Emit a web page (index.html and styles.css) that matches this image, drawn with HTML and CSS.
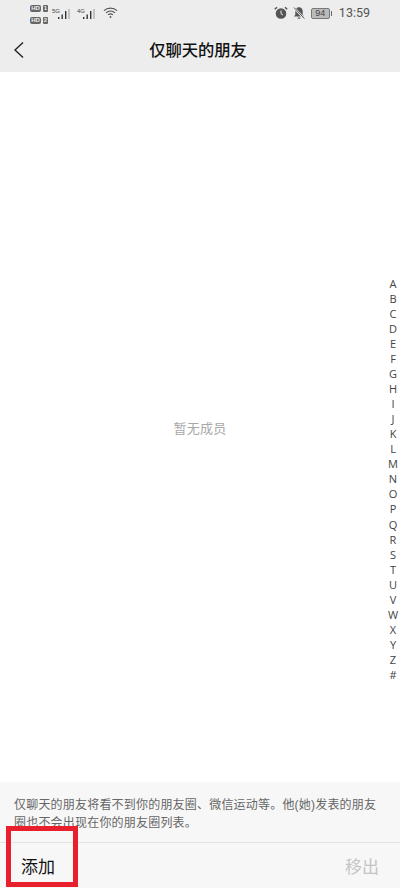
FILE: index.html
```html
<!DOCTYPE html>
<html lang="zh-CN">
<head>
<meta charset="utf-8">
<title>仅聊天的朋友</title>
<link rel="stylesheet" href="styles.css">
</head>
<body>
<div class="page">
  <header class="top">
    <div class="status">
      <div class="status-left">
        <div class="sims">
          <div class="sim"><span class="hd">HD</span><span class="slot">1</span></div>
          <div class="sim"><span class="hd">HD</span><span class="slot">2</span></div>
        </div>
        <div class="signal"><span class="net">5G</span>
          <svg class="bars" viewBox="0 0 16 12"><path d="M1 11h1.400v-2H1zM4.500 11h1.400V6.500H4.500zM8 11h1.400V3H8z" fill="#333"/><path d="M11.500 11h1V1h-1z" fill="#999"/></svg>
        </div>
        <div class="signal"><span class="net">4G</span>
          <svg class="bars" viewBox="0 0 16 12"><path d="M1 11h1.400v-2H1zM4.500 11h1.400V6.500H4.500zM8 11h1.400V3H8z" fill="#333"/><path d="M11.500 11h1V1h-1z" fill="#999"/></svg>
        </div>
        <svg class="wifi" viewBox="0 0 16 13" fill="none" stroke="#555" stroke-width="1.200"><path d="M1 4.500c4-3.600 10-3.600 14 0M3.200 6.900c2.800-2.500 6.800-2.500 9.600 0M5.400 9.100c1.500-1.300 3.700-1.300 5.200 0"/><circle cx="8" cy="11.300" r="1" fill="#555" stroke="none"/></svg>
      </div>
      <div class="status-right">
        <svg class="ico" viewBox="0 0 14 14"><circle cx="7" cy="7.500" r="5.300" fill="#555"/><path d="M7 4.500v3.200l2 1.300" stroke="#eee" stroke-width="1" fill="none"/><path d="M.8 3.300 3 1.200M13.200 3.300 11 1.200" stroke="#555" stroke-width="1.500"/></svg>
        <svg class="ico" viewBox="0 0 14 14"><path d="M7 1.300c-2.500 0-3.700 1.900-3.700 4v3.400L2 10.500h10l-1.300-1.800V5.300c0-2.100-1.200-4-3.700-4z" fill="#555"/><path d="M5.700 11.500h2.600v1.200H5.700z" fill="#555"/><path d="M1.800 1.500l10.400 11" stroke="#eee" stroke-width="2.200"/><path d="M2 1.500l10.300 11" stroke="#555" stroke-width="1"/></svg>
        <div class="battery"><span class="cell">94</span><span class="nub"></span></div>
        <span class="clock">13:59</span>
      </div>
    </div>
    <div class="nav">
      <svg class="back" viewBox="0 0 12 18" fill="none" stroke="#222" stroke-width="1.400"><path d="M10 1.500 2 9l8 7.500"/></svg>
      <h1 class="title">仅聊天的朋友</h1>
    </div>
  </header>
  <main class="content">
    <p class="empty">暂无成员</p>
    <ol class="index">
      <li>A</li><li>B</li><li>C</li><li>D</li><li>E</li><li>F</li><li>G</li><li>H</li><li>I</li><li>J</li><li>K</li><li>L</li><li>M</li><li>N</li><li>O</li><li>P</li><li>Q</li><li>R</li><li>S</li><li>T</li><li>U</li><li>V</li><li>W</li><li>X</li><li>Y</li><li>Z</li><li>#</li>
    </ol>
  </main>
  <section class="note">仅聊天的朋友将看不到你的朋友圈、微信运动等。他(她)发表的朋友圈也不会出现在你的朋友圈列表。</section>
  <footer class="actions">
    <span class="add">添加</span>
    <span class="remove">移出</span>
    <div class="highlight"></div>
  </footer>
</div>
</body>
</html>
```
FILE: styles.css
```css
* { box-sizing: border-box; }
html, body { margin: 0; padding: 0; }
body {
  width: 400px;
  height: 888px;
  overflow: hidden;
  font-family: "Liberation Sans", "Noto Sans CJK SC", sans-serif;
  background: #fff;
}
.page { display: flex; flex-direction: column; height: 888px; }

.top { height: 72px; background: #ededed; flex: none; }
.status {
  height: 26px;
  display: flex;
  justify-content: space-between;
  align-items: center;
  padding: 0 30px 0 30px;
}
.status-left { display: flex; align-items: center; gap: 4px; }
.sims { display: flex; flex-direction: column; gap: 5px; margin-top: 2px; }
.sim { display: flex; gap: 2px; align-items: center; height: 7px; }
.hd {
  width: 11px; height: 7px; border-radius: 2px; background: #666; color: #eee;
  font: bold 6px/7px "Liberation Sans", sans-serif; text-align: center;
}
.slot {
  width: 5px; height: 7px; border-radius: 1px; background: #666; color: #eee;
  font: bold 6px/7px "Liberation Sans", sans-serif; text-align: center;
}
.signal { display: flex; align-items: flex-start; margin-top: 1px; }
.net { font: 6px/7px "Liberation Sans", sans-serif; color: #444; margin-right: -3px; }
.bars { width: 16px; height: 12px; }
.wifi { width: 15px; height: 13px; margin-left: 1px; margin-top: -2px; }
.status-right { display: flex; align-items: center; gap: 4px; }
.ico { width: 14px; height: 14px; }
.battery { display: flex; align-items: center; margin-left: 1px; }
.cell {
  width: 19px; height: 11px; border: 1px solid #777; border-radius: 2px;
  background: #bbb; color: #444;
  font: 9px/9px "Liberation Sans", sans-serif; text-align: center;
}
.nub { width: 1px; height: 5px; background: #666; margin-left: 1px; }
.clock { font: 12.500px/14px Roboto, sans-serif; color: #555; margin-left: 3px; }

.nav { height: 46px; position: relative; display: flex; align-items: center; justify-content: center; }
.back { position: absolute; left: 13px; top: 15px; width: 12px; height: 18px; }
.title { margin: 2px 4px 0 0; font-size: 16.300px; font-weight: 500; color: #111; line-height: 46px; }

.content {
  flex: 1;
  position: relative;
  display: flex;
  align-items: center;
  justify-content: center;
  background: #fff;
}
.empty { margin: 0; font-size: 13px; color: #a8a8a8; letter-spacing: 0.2px; }
.index {
  list-style: none;
  margin: 0;
  padding: 0;
  position: absolute;
  right: 0;
  top: 204px;
  width: 14px;
}
.index li {
  height: 15.040px;
  line-height: 15px;
  font-size: 11px;
  font-family: "Open Sans", sans-serif;
  color: #444;
  text-align: center;
}

.note {
  flex: none;
  height: 61px;
  padding: 14px 14px 0;
  background: #f7f7f7;
  font-size: 12px;
  letter-spacing: 0.2px;
  line-height: 18px;
  color: #666;
  border-bottom: 1px solid #e3e3e3;
}
.actions {
  flex: none;
  height: 45px;
  position: relative;
  background: #f7f7f7;
  display: flex;
  justify-content: space-between;
  align-items: center;
  padding: 0 21px;
  font-size: 17px;
}
.add { color: #111; }
.remove { color: #c4c4c4; }
.highlight {
  position: absolute;
  left: 6px;
  top: -17px;
  width: 72px;
  height: 61px;
  border: 5px solid #e8202e;
}
```
